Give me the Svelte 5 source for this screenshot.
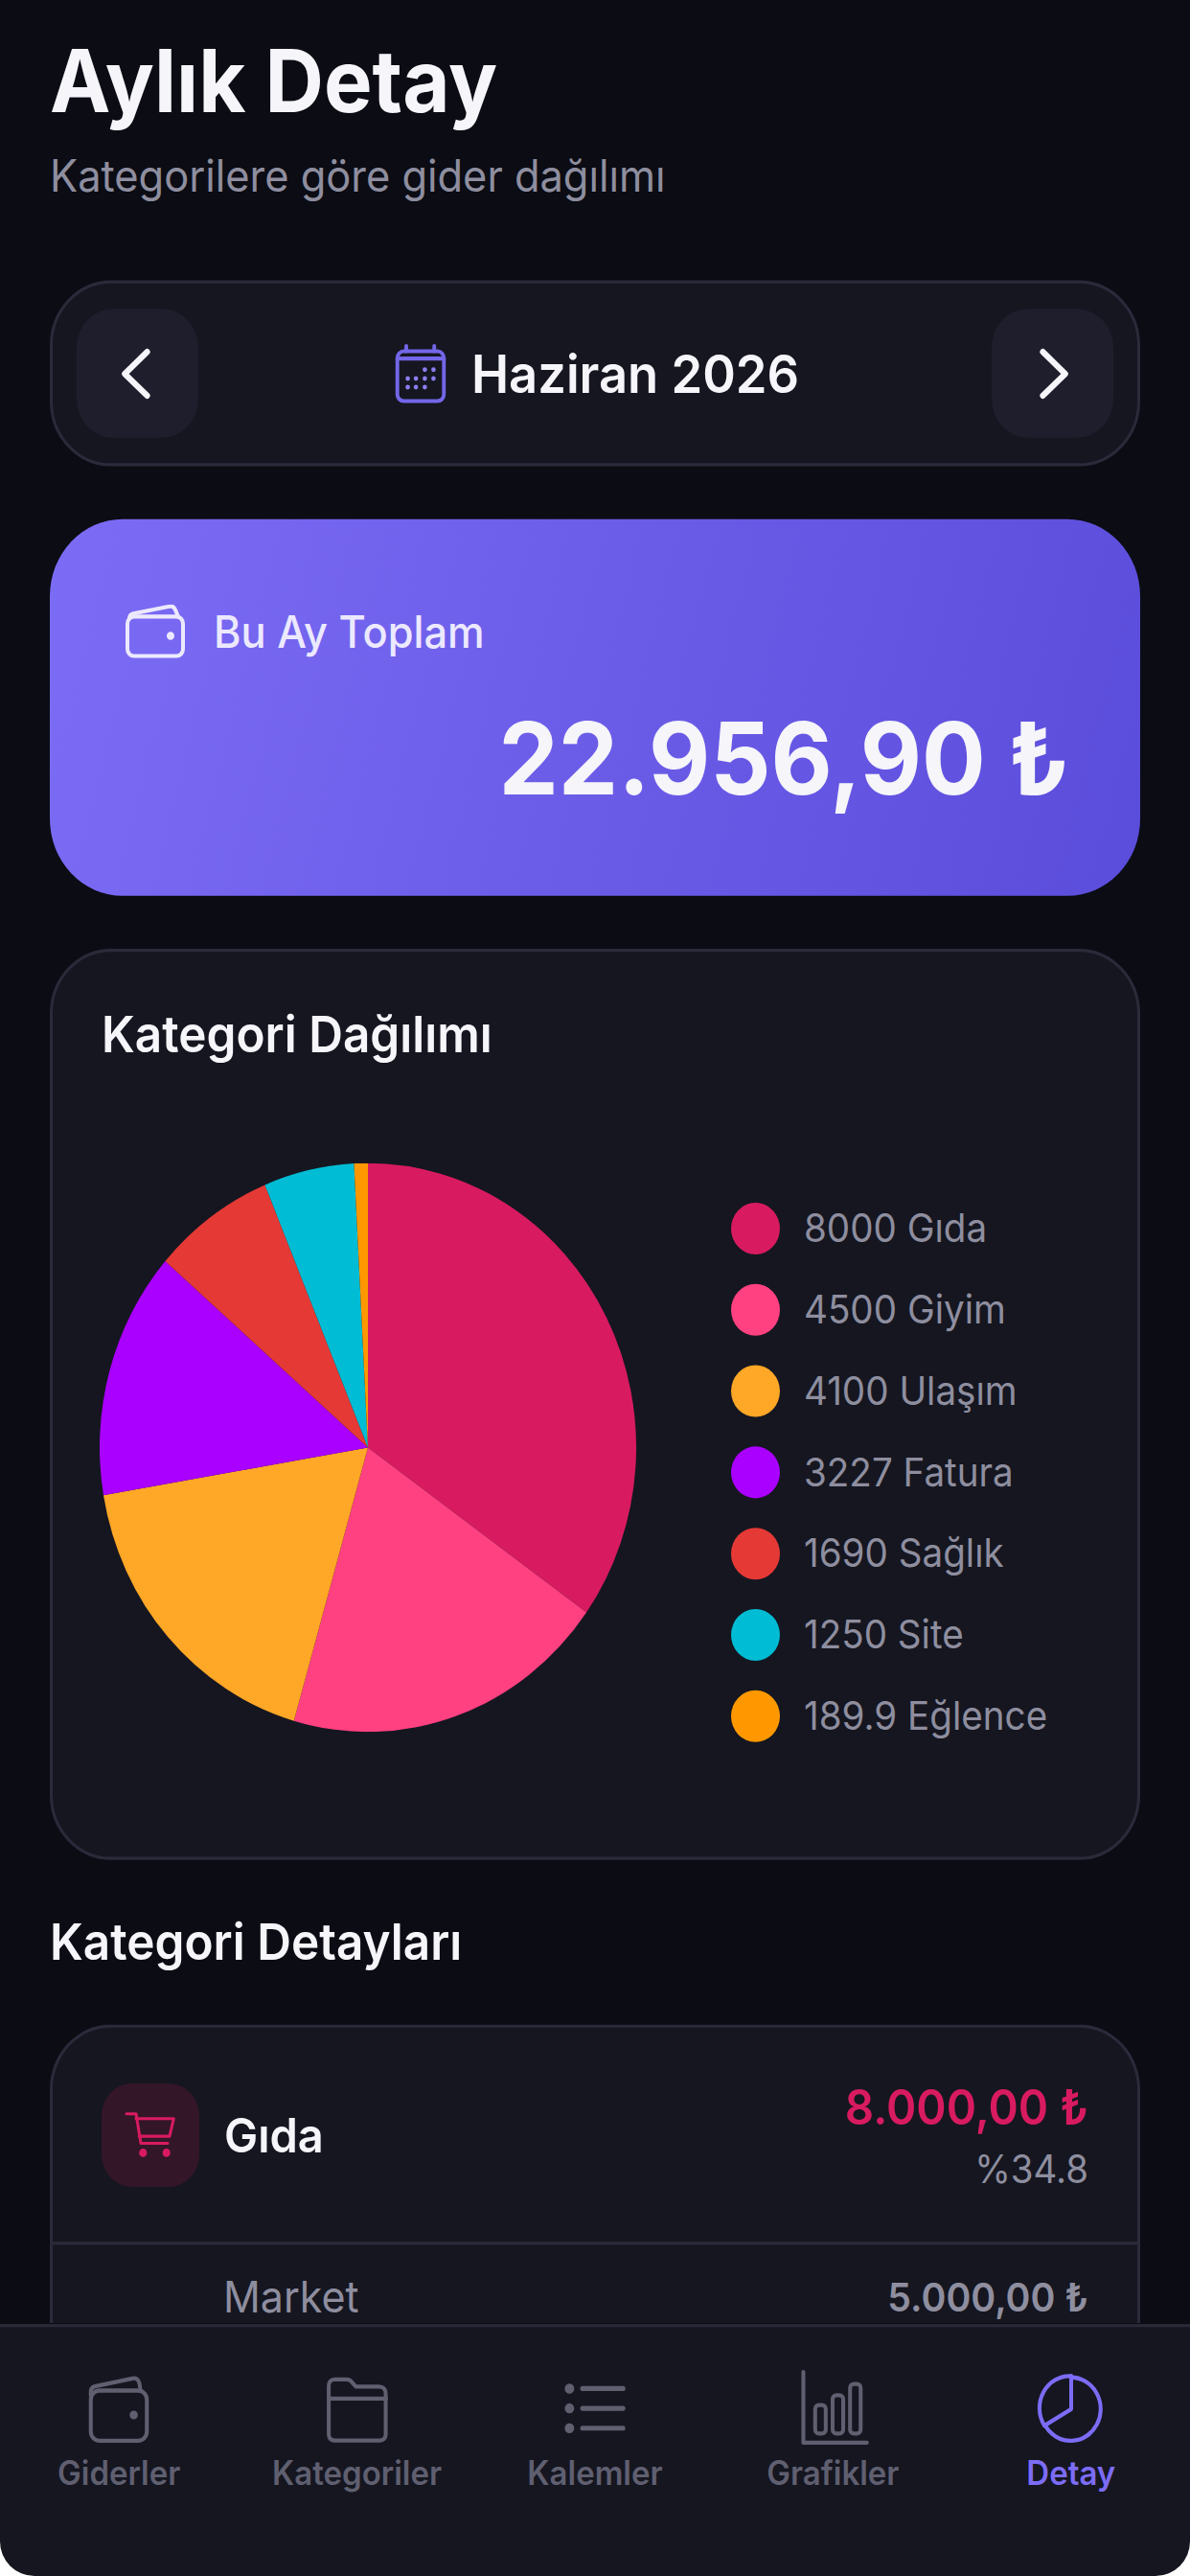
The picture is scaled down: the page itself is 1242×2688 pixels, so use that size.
<script>
	const slices = [
		{ value: 8000, name: 'Gıda', color: '#d81b60' },
		{ value: 4500, name: 'Giyim', color: '#ff4081' },
		{ value: 4100, name: 'Ulaşım', color: '#ffa726' },
		{ value: 3227, name: 'Fatura', color: '#aa00ff' },
		{ value: 1690, name: 'Sağlık', color: '#e53935' },
		{ value: 1250, name: 'Site', color: '#00bcd4' },
		{ value: 189.9, name: 'Eğlence', color: '#ff9800' }
	];

	const total = slices.reduce((sum, s) => sum + s.value, 0);

	function arcs() {
		let angle = 0;
		return slices.map((s) => {
			const start = angle;
			angle += (s.value / total) * Math.PI * 2;
			const x1 = 280 + 280 * Math.sin(start);
			const y1 = 280 - 280 * Math.cos(start);
			const x2 = 280 + 280 * Math.sin(angle);
			const y2 = 280 - 280 * Math.cos(angle);
			const large = angle - start > Math.PI ? 1 : 0;
			return { color: s.color, d: `M280 280L${x1} ${y1}A280 280 0 ${large} 1 ${x2} ${y2}Z` };
		});
	}

	const tabs = ['Giderler', 'Kategoriler', 'Kalemler', 'Grafikler', 'Detay'];
	const calendarDots = [
		[13.7, 10.4], [17.2, 10.4],
		[6.8, 13.8], [10.1, 13.8], [13.7, 13.8], [17.2, 13.8],
		[6.8, 17.1], [10.1, 17.1], [13.7, 17.1]
	];
</script>

<div class="frame">
	<div class="screen">
		<main class="content">
			<h1>Aylık Detay</h1>
			<p class="subtitle">Kategorilere göre gider dağılımı</p>

			<section class="month card">
				<button class="arrow" aria-label="Önceki ay">
					<svg viewBox="0 0 24 24" width="72" height="72" fill="none" stroke="#f5f5fa" stroke-width="2" stroke-linecap="round" stroke-linejoin="round"><path d="M15.2 4.8 7.4 12l7.8 7.2" /></svg>
				</button>
				<div class="month-label">
					<svg viewBox="0 0 24 24" width="62" height="62" fill="none" stroke="#7366e8" stroke-width="1.5" stroke-linecap="round" stroke-linejoin="round">
						<path d="M6.2 1.4v2M17.5 1.4v2" />
						<rect x="2.6" y="3.4" width="18.8" height="19" rx="2.6" />
						<path d="M2.6 6.2h18.8" />
						{#each calendarDots as [cx, cy]}
							<circle {cx} {cy} r=".9" fill="#8a7ef0" stroke="none" />
						{/each}
					</svg>
					<span>Haziran 2026</span>
				</div>
				<button class="arrow" aria-label="Sonraki ay">
					<svg viewBox="0 0 24 24" width="72" height="72" fill="none" stroke="#f5f5fa" stroke-width="2" stroke-linecap="round" stroke-linejoin="round"><path d="M8.8 4.8 16.6 12l-7.8 7.2" /></svg>
				</button>
			</section>

			<section class="hero">
				<div class="hero-label">
					<svg viewBox="0 0 62 53" width="62" height="53" fill="none" stroke="#ece9ff" stroke-width="4" stroke-linecap="round" stroke-linejoin="round">
						<path d="M4 14c0-3 2-4.600 4-5L46 2c3-.5 5 1 6 3.500L55 12" />
						<rect x="2" y="12" width="58" height="39" rx="7" />
						<circle cx="47" cy="31" r="2" fill="#ece9ff" />
					</svg>
					<span>Bu Ay Toplam</span>
				</div>
				<div class="hero-total">22.956,90 ₺</div>
			</section>

			<section class="chart card">
				<h2>Kategori Dağılımı</h2>
				<div class="chart-body">
					<svg class="pie" viewBox="0 0 560 560" width="560" height="560">
						{#each arcs() as arc}
							<path d={arc.d} fill={arc.color} />
						{/each}
					</svg>
					<ul class="legend">
						{#each slices as s}
							<li>
								<i style:background={s.color}></i>
								<span>{s.value} {s.name}</span>
							</li>
						{/each}
					</ul>
				</div>
			</section>

			<h2 class="section-title">Kategori Detayları</h2>

			<section class="details card">
				<div class="detail-head">
					<div class="cat-icon">
						<svg viewBox="0 0 54 46" width="54" height="46" fill="none" stroke="#d81b60" stroke-width="3" stroke-linecap="round" stroke-linejoin="round">
							<path d="M2 2h10l5 29h28" />
							<path d="M12 6.7h39.3L47 24H15.3" />
							<circle cx="19.3" cy="40.4" r="2.6" fill="#d81b60" />
							<circle cx="43.7" cy="40.4" r="2.6" fill="#d81b60" />
						</svg>
					</div>
					<div class="cat-name">Gıda</div>
					<div class="cat-sum">
						<div class="cat-amount">8.000,00 ₺</div>
						<div class="cat-share">%34.8</div>
					</div>
				</div>
				<div class="detail-row">
					<span>Market</span>
					<b>5.000,00 ₺</b>
				</div>
			</section>
		</main>

		<nav class="tabbar">
			{#each tabs as tab, i}
				<div class="tab" class:active={i === 4}>
					<svg viewBox="0 0 24 24" width="78" height="78" fill="none" stroke="currentColor" stroke-width="1.25" stroke-linecap="round" stroke-linejoin="round">
						{#if i === 0}
							<path d="M3 8V6.900c0-.8.5-1.400 1.300-1.600L16.400 2.900c1.200-.2 2 .4 2.200 1.500l.4 2.300" />
							<rect x="3" y="6.600" width="18" height="15.200" rx="2.800" />
							<circle cx="16.800" cy="14" r=".7" fill="currentColor" />
						{:else if i === 1}
							<path d="M2.800 20V5.200c0-1.200.7-2 1.900-2h3.800c.7 0 1.200.2 1.600.7l1.400 1.500h7.400c1.400 0 2.200.8 2.200 2.200v12.200c0 1.200-.7 1.900-1.900 1.900H4.700c-1.200 0-1.900-.7-1.900-1.800Z" />
							<path d="M2.800 9h18.400" />
						{:else if i === 2}
							<path d="M8 6h13M8 12h13M8 18h13" stroke-width="1.500" />
							<circle cx="3.800" cy="6" r=".9" fill="currentColor" />
							<circle cx="3.800" cy="12" r=".9" fill="currentColor" />
							<circle cx="3.800" cy="18" r=".9" fill="currentColor" />
						{:else if i === 3}
							<path d="M2.600 1v21.400h20.400" />
							<rect x="6.400" y="11" width="3.400" height="8.600" rx="1.200" />
							<rect x="12" y="8" width="3.400" height="11.600" rx="1.200" />
							<rect x="17.600" y="4.600" width="3.400" height="15" rx="1.200" />
						{:else}
							<path d="M12 2.200v10l-8.600 5" />
							<path d="M12 2.600a9.600 9.600 0 1 1-8.200 14.800" />
							<path d="M12 2.200a9.700 9.700 0 0 0-8.600 15" />
						{/if}
					</svg>
					<span>{tab}</span>
				</div>
			{/each}
		</nav>
	</div>
</div>

<style>
	:global(body) {
		margin: 0;
		background: #fff;
	}

	/* the reference is stretched about 6% in height, so the page is laid out at 2536 and scaled */
	.frame {
		width: 1242px;
		height: 2688px;
		overflow: hidden;
		border-radius: 0 0 36px 36px;
	}

	.screen {
		width: 1242px;
		height: 2536px;
		display: flex;
		flex-direction: column;
		overflow: hidden;
		transform: scaleY(1.05994);
		transform-origin: top left;
		background: #0b0c14;
		color: #f5f5fa;
		font-family: Inter, 'Noto Sans', sans-serif;
	}

	.content {
		flex: 1;
		min-height: 0;
		overflow: hidden;
		padding: 0 52px;
	}

	h1 {
		margin: 29px 0 0;
		font-size: 85px;
		line-height: 102px;
		font-weight: 700;
	}

	.subtitle {
		margin: 12px 0 0;
		font-size: 43.4px;
		line-height: 60px;
		color: #8e8e9f;
	}

	.card {
		background: #151620;
		border: 3px solid #2a2a3a;
		border-radius: 64px;
	}

	.month {
		margin-top: 73px;
		padding: 25px;
		display: flex;
		align-items: center;
		justify-content: space-between;
	}

	.arrow {
		width: 127px;
		height: 127px;
		padding: 0;
		display: flex;
		align-items: center;
		justify-content: center;
		border: 0;
		border-radius: 38px;
		background: #1e1e2c;
	}

	.month-label {
		display: flex;
		align-items: center;
		gap: 22px;
		font-size: 52.5px;
		font-weight: 600;
	}

	.hero {
		margin-top: 52px;
		height: 371px;
		box-sizing: border-box;
		padding: 84px 74px 0 79px;
		border-radius: 76px;
		background: linear-gradient(105deg, #7c6cf5, #5b4ddb);
	}

	.hero-label {
		display: flex;
		align-items: center;
		gap: 30px;
		font-size: 43.4px;
		font-weight: 500;
		color: #ece9ff;
	}

	.hero-total {
		margin-top: 36px;
		text-align: right;
		font-size: 99px;
		line-height: 124px;
		font-weight: 700;
	}

	.chart {
		margin-top: 52px;
		height: 897px;
		box-sizing: border-box;
		padding: 48px 0 0 51px;
	}

	h2 {
		margin: 0;
		font-size: 49.5px;
		line-height: 66px;
		font-weight: 600;
	}

	.chart-body {
		display: flex;
		align-items: center;
		margin: 70px 0 0 -2px;
	}

	.legend {
		list-style: none;
		margin: 48px 0 0 99px;
		padding: 0;
	}

	.legend li {
		height: 80px;
		display: flex;
		align-items: center;
		gap: 25px;
		font-size: 38.6px;
		color: #8e8e9f;
	}

	.legend i {
		width: 51px;
		height: 51px;
		border-radius: 50%;
	}

	.section-title {
		margin: 47px 0 0;
	}

	.details {
		margin-top: 49px;
		border-bottom: 0;
		border-radius: 64px 64px 0 0;
	}

	.detail-head {
		display: flex;
		align-items: center;
		height: 214px;
		box-sizing: border-box;
		padding: 0 51px;
		border-bottom: 3px solid #2a2a3a;
	}

	.cat-icon {
		width: 102px;
		height: 102px;
		display: flex;
		align-items: center;
		justify-content: center;
		border-radius: 32px;
		background: rgba(216, 27, 96, 0.16);
	}

	.cat-name {
		flex: 1;
		margin-left: 26px;
		font-size: 47px;
		font-weight: 600;
	}

	.cat-sum {
		text-align: right;
	}

	.cat-amount {
		font-size: 47.5px;
		line-height: 62px;
		font-weight: 600;
		color: #d81b60;
	}

	.cat-share {
		margin-top: 4px;
		font-size: 38.4px;
		line-height: 50px;
		color: #8e8e9f;
	}

	.detail-row {
		display: flex;
		align-items: center;
		justify-content: space-between;
		padding: 25px 51px 0 178px;
		font-size: 43px;
		color: #8e8e9f;
	}

	.detail-row b {
		font-size: 39.3px;
		font-weight: 600;
	}

	.tabbar {
		flex: none;
		height: 248px;
		box-sizing: border-box;
		display: grid;
		grid-template-columns: repeat(5, 1fr);
		align-items: start;
		padding-top: 41px;
		background: #151620;
		border-top: 3px solid #2a2a38;
	}

	.tab {
		display: flex;
		flex-direction: column;
		align-items: center;
		gap: 4px;
		font-size: 33px;
		font-weight: 600;
		color: #5f5f70;
	}

	.tab.active {
		color: #7c6cf5;
	}
</style>
